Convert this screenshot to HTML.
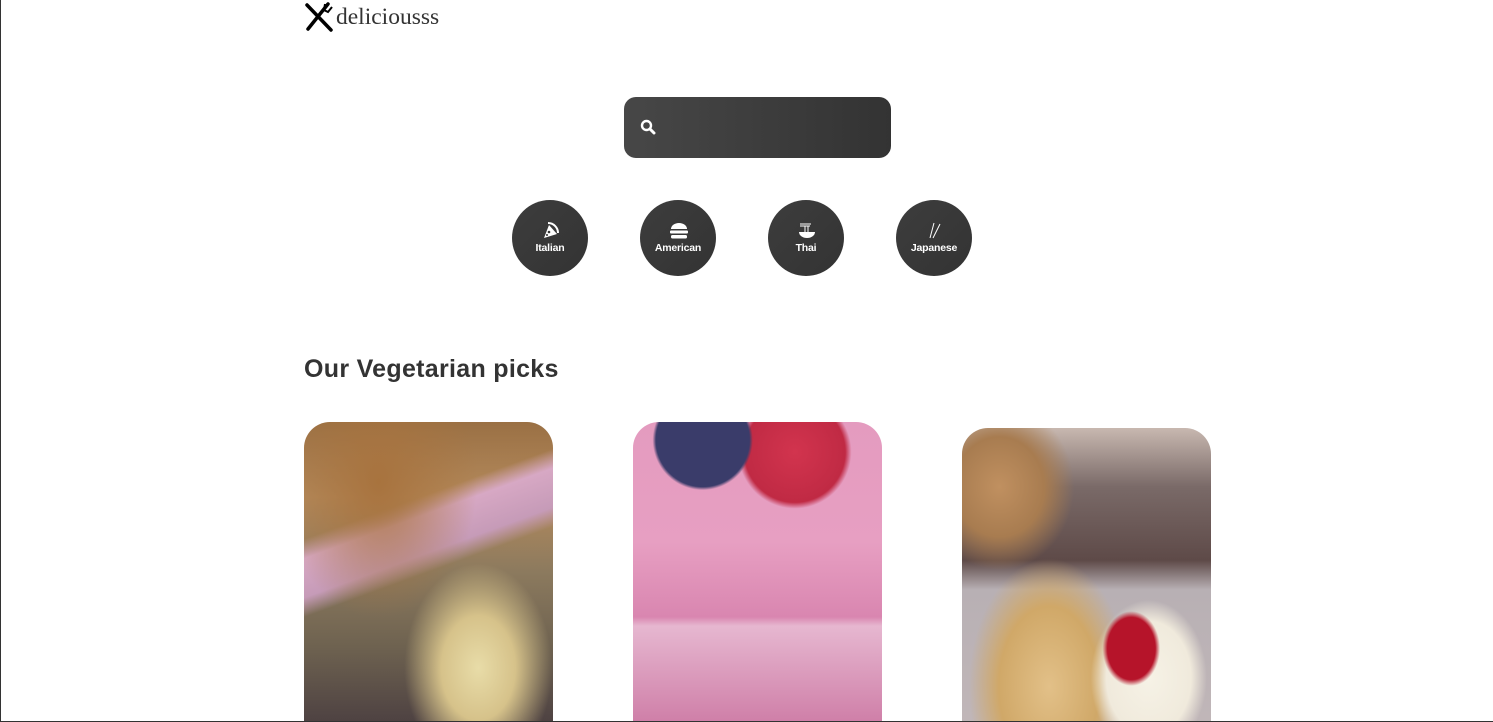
<!DOCTYPE html>
<html><head><meta charset="utf-8"><style>
html,body{margin:0;padding:0;width:1493px;height:722px;overflow:hidden;background:#fff}
body{position:relative}
.bl{position:absolute;left:0;top:0;width:1px;height:722px;background:#333}
.bb{position:absolute;left:0;bottom:0;width:1493px;height:1px;background:#333;z-index:5}
.logo{position:absolute;left:304px;top:2px;display:flex;align-items:center;font-family:"Liberation Serif",serif;font-size:23.5px;color:#333}
.search{position:absolute;left:624px;top:97px;width:267px;height:61px;border-radius:12px;background:linear-gradient(90deg,#474747,#333)}
.cat{position:absolute;top:200px;width:76px;height:76px;border-radius:50%;background:linear-gradient(135deg,#3d3d3d,#333);color:#fff;font-family:"Liberation Sans",sans-serif;font-weight:bold;font-size:10.5px;text-align:center}
.cat svg{position:absolute;left:29px;top:22px}
.cat span{position:absolute;left:0;right:0;top:42px;letter-spacing:-0.2px}
h2{position:absolute;left:304px;top:355px;margin:0;font-family:"Liberation Sans",sans-serif;font-size:25px;font-weight:bold;color:#333;letter-spacing:0.3px}
.card{position:absolute;width:249px;border-radius:26px 26px 0 0;overflow:hidden}
</style></head><body>
<div class="bl"></div><div class="bb"></div>
<div class="logo"><svg width="30" height="30" viewBox="0 0 30 30"><path d="M3 3 L27 28" stroke="#000" stroke-width="3.5" stroke-linecap="round"/><path d="M24 2 L4 27" stroke="#000" stroke-width="3.5" stroke-linecap="round"/><path d="M21 2 L20 8 L24 10 L28 5" stroke="#000" stroke-width="2" fill="none"/></svg><span style="margin-left:2px">deliciousss</span></div>
<div class="search"><svg style="position:absolute;left:16px;top:22px" width="16" height="16" viewBox="0 0 16 16"><circle cx="6.5" cy="6.5" r="4.5" stroke="#fff" stroke-width="2.4" fill="none"/><path d="M10 10 L14 14" stroke="#fff" stroke-width="3" stroke-linecap="round"/></svg></div>
<div class="cat" style="left:512px"><svg width="18" height="18" viewBox="0 0 18 18"><path d="M3 16 L8 3 L16 12 Z" fill="#fff"/><path d="M7 1 A10 10 0 0 1 17 11" stroke="#fff" stroke-width="2" fill="none"/><circle cx="8" cy="10" r="1.3" fill="#333"/><circle cx="6" cy="13" r="1" fill="#333"/></svg><span>Italian</span></div>
<div class="cat" style="left:640px"><svg width="20" height="18" viewBox="0 0 20 18"><path d="M2 7 A8 6 0 0 1 18 7 Z" fill="#fff"/><rect x="1" y="8.5" width="18" height="3" rx="1" fill="#fff"/><rect x="2" y="13" width="16" height="3.5" rx="1.5" fill="#fff"/></svg><span>American</span></div>
<div class="cat" style="left:768px"><svg width="20" height="18" viewBox="0 0 20 18"><path d="M3 2 H14 M3 4 H13" stroke="#fff" stroke-width="1"/><path d="M8 4 V10 M11 4 V10" stroke="#fff" stroke-width="1"/><path d="M2 10 H18 A8 6 0 0 1 2 10 Z" fill="#fff"/></svg><span>Thai</span></div>
<div class="cat" style="left:896px"><svg width="20" height="18" viewBox="0 0 20 18"><path d="M9 1 L5 16 M15 2 L8 16" stroke="#fff" stroke-width="1"/></svg><span>Japanese</span></div>
<h2>Our Vegetarian picks</h2>
<div class="card" style="left:304px;top:422px;height:300px;background:radial-gradient(ellipse at 30% 20%,#a8733e 0,transparent 40%),linear-gradient(160deg,transparent 30%,#d7a8c4 35%,#c69bb8 45%,transparent 50%),radial-gradient(ellipse at 70% 82%,#e8dca8 0,#d6c28a 15%,transparent 30%),linear-gradient(180deg,#9a7044 0%,#b48a5c 25%,#8c7a5e 50%,#6e6250 75%,#4e4242 100%)"></div>
<div class="card" style="left:633px;top:422px;height:300px;background:radial-gradient(circle at 28% 6%,#3a3c6a 0,#3a3c6a 14%,transparent 15%),radial-gradient(circle at 65% 10%,#d2344e 0,#c02a44 16%,transparent 18%),linear-gradient(180deg,#e49bbf 0%,#e79fc2 40%,#d986b0 65%,#e6b7d0 68%,#cf7fa8 100%)"></div>
<div class="card" style="left:962px;top:428px;height:294px;background:radial-gradient(ellipse at 68% 75%,#b6142a 0,#b6142a 10%,transparent 12%),radial-gradient(ellipse at 75% 85%,#f6f2e6 0,#f0eadc 16%,transparent 22%),radial-gradient(ellipse at 35% 88%,#e2c088 0,#d0a868 22%,transparent 35%),radial-gradient(ellipse at 15% 20%,#c09060 0,#a87c50 15%,transparent 25%),linear-gradient(180deg,#c8b8b0 0%,#7a6a68 20%,#5e4a48 45%,#b8b0b4 55%,#c0b6b8 100%)"></div>
</body></html>
